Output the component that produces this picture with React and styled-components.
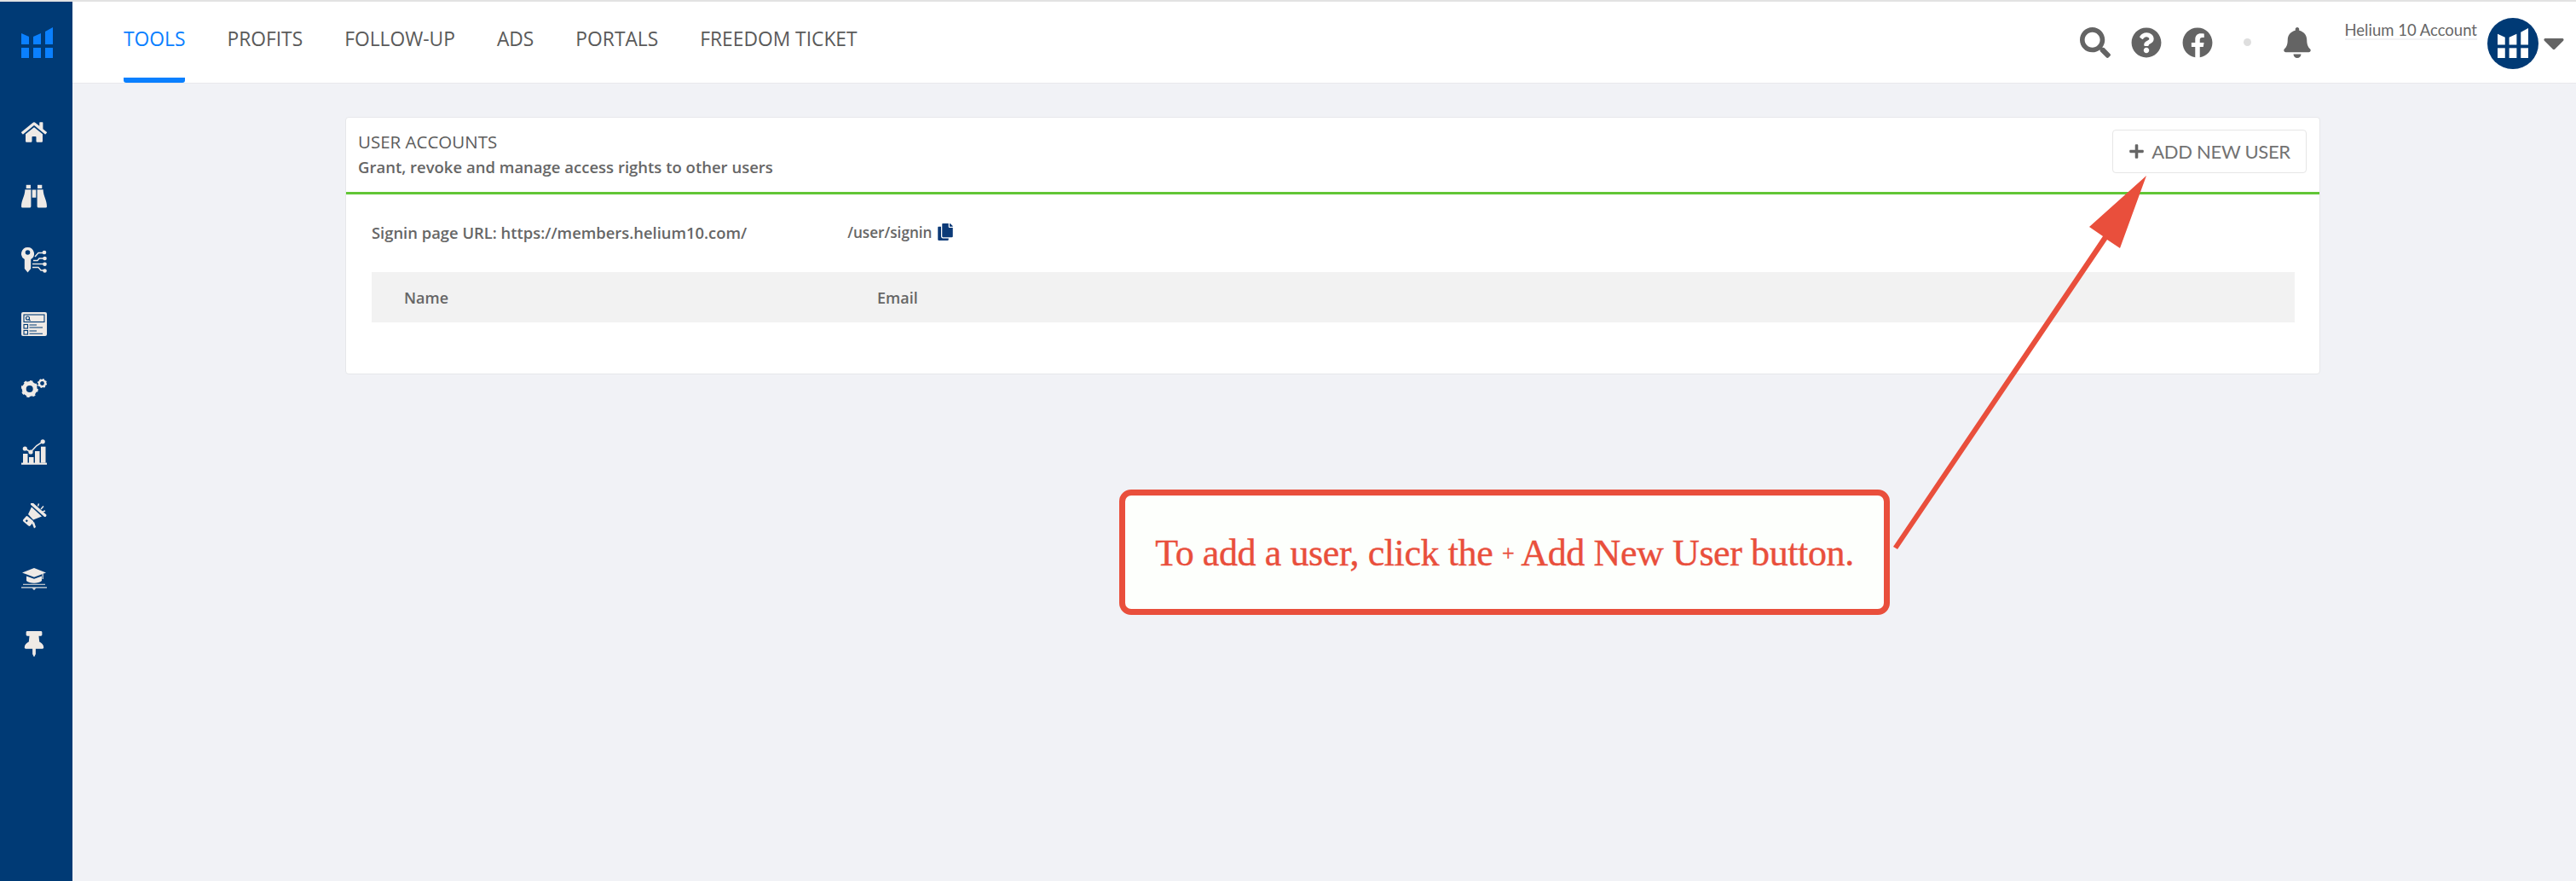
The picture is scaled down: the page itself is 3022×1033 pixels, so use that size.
import React from "react";
import styled, { createGlobalStyle } from "styled-components";
import {
  FaHome,
  FaThumbtack,
  FaSearch,
  FaQuestionCircle,
  FaFacebook,
  FaBell,
  FaCaretDown,
  FaCopy,
  FaPlus,
} from "react-icons/fa";

const CREAM = "#efeae6";
const NAVY = "#003a75";

const GlobalStyle = createGlobalStyle`
  html, body {
    margin: 0;
    padding: 0;
    background: #f1f2f6;
  }
  * {
    box-sizing: border-box;
  }
`;

const Page = styled.div`
  position: relative;
  display: flex;
  width: 3022px;
  height: 1033px;
  overflow: hidden;
  border-top: 2px solid #e2e2e2;
  background: #f1f2f6;
  font-family: "Open Sans", "Lato", sans-serif;
`;

const Sidebar = styled.aside`
  flex: 0 0 85px;
  background: ${NAVY};
  padding-top: 30px;
`;

const LogoSlot = styled.div`
  display: flex;
  height: 85px;
  padding-left: 25px;
  color: #0a80ff;
`;

const SideItem = styled.div`
  display: flex;
  width: 80px;
  height: 75px;
  align-items: center;
  justify-content: center;
  color: ${CREAM};
  font-size: ${({ $size }) => $size || 30}px;
`;

const Content = styled.div`
  flex: 1;
  display: flex;
  flex-direction: column;
`;

const TopBar = styled.header`
  display: flex;
  height: 96px;
  align-items: stretch;
  justify-content: space-between;
  background: #fff;
  border-bottom: 1px solid #e9e9ec;
  padding: 0 6px 0 60px;
`;

const Tabs = styled.nav`
  display: flex;
  gap: 49px;
`;

const Tab = styled.a`
  display: block;
  height: 95px;
  padding-top: 29px;
  font-family: "Open Sans", sans-serif;
  font-size: 22.8px;
  line-height: 29px;
  color: ${({ $active }) => ($active ? "#0a80ff" : "#5a5a5a")};
  border-bottom: 6px solid ${({ $active }) => ($active ? "#0a80ff" : "transparent")};
  border-radius: 0 0 3px 3px;
`;

const TopRight = styled.div`
  display: flex;
  align-items: center;
`;

const TopIcon = styled.span`
  display: flex;
  margin-left: ${({ $gap }) => $gap}px;
  color: #646464;
  font-size: 36px;
`;

const StatusDot = styled.span`
  width: 9px;
  height: 9px;
  margin-left: 36px;
  border-radius: 50%;
  background: #dedede;
`;

const AccountName = styled.span`
  align-self: flex-start;
  margin: 23px 12px 0 38px;
  font-family: "Lato", sans-serif;
  font-size: 18.5px;
  line-height: 20px;
  color: #666;
  border-bottom: 2px solid #f3f3f5;
  white-space: nowrap;
`;

const Avatar = styled.span`
  display: flex;
  width: 60px;
  height: 60px;
  margin-top: 2px;
  align-items: center;
  justify-content: center;
  border-radius: 50%;
  background: ${NAVY};
  color: #fff;
`;

const Caret = styled.span`
  display: flex;
  margin-left: -2px;
  color: #646464;
  font-size: 40px;
`;

const Main = styled.main`
  padding: 39px 0 0 320px;
`;

const Card = styled.section`
  width: 2317px;
  height: 302px;
  background: #fff;
  border: 1px solid #e6e7ea;
  border-radius: 4px;
`;

const CardHead = styled.div`
  display: flex;
  height: 90px;
  align-items: center;
  justify-content: space-between;
  padding: 0 15px 0 14px;
  border-bottom: 3px solid #62c636;
`;

const CardTitle = styled.h2`
  margin: -2px 0 5px;
  font-size: 20.5px;
  line-height: 26px;
  font-weight: 500;
  color: #5c5c5c;
`;

const CardSub = styled.p`
  margin: 0;
  font-size: 18.5px;
  line-height: 24px;
  font-weight: 600;
  color: #666;
`;

const AddButton = styled.button`
  display: flex;
  width: 228px;
  height: 51px;
  margin-top: -8px;
  align-items: center;
  justify-content: center;
  gap: 8px;
  background: #fff;
  border: 1px solid #e6e6e6;
  border-radius: 4px;
  font-family: "Lato", sans-serif;
  font-size: 22px;
  letter-spacing: -0.3px;
  color: #727272;
  svg {
    font-size: 19px;
    color: #666;
  }
`;

const CardBody = styled.div`
  padding: 32px 29px 0 30px;
`;

const SigninRow = styled.div`
  display: flex;
  align-items: center;
  height: 24px;
  font-size: 18.4px;
  font-weight: 600;
  color: #666;
`;

const UrlPath = styled.span`
  margin-left: 118px;
  margin-right: 5px;
  font-size: 17.2px;
`;

const CopyMark = styled.span`
  display: flex;
  color: #0b3a78;
  font-size: 20px;
`;

const TableHead = styled.div`
  display: grid;
  grid-template-columns: 555px 1fr;
  align-items: center;
  height: 59px;
  margin-top: 35px;
  padding-left: 38px;
  background: #f2f2f2;
  font-size: 18px;
  font-weight: 600;
  color: #666;
`;

const Callout = styled.div`
  position: absolute;
  left: 1313px;
  top: 572px;
  display: flex;
  width: 904px;
  height: 147px;
  padding-top: 2px;
  align-items: center;
  justify-content: center;
  background: #fdfffc;
  border: 7px solid #e94f3c;
  border-radius: 14px;
  font-family: "Liberation Serif", "DejaVu Serif", serif;
  font-size: 44px;
  letter-spacing: -0.4px;
  -webkit-text-stroke: 0.4px #e94f3c;
  color: #e94f3c;
  white-space: pre;
`;

const SmallPlus = styled.span`
  font-size: 26px;
`;

const Arrow = styled.svg`
  position: absolute;
  left: 2210px;
  top: 198px;
`;

const LogoMark = ({ size = 37 }) => (
  <svg width={size} height={size * (36 / 37)} viewBox="0 0 37 36" fill="currentColor">
    <polygon points="0,7 9,11 9,20 0,20" />
    <polygon points="14,11 23,7 23,20 14,20" />
    <polygon points="28,5 37,0 37,20 28,20" />
    <rect x="0" y="24" width="9" height="12" />
    <rect x="14" y="24" width="9" height="12" />
    <rect x="28" y="24" width="9" height="12" />
  </svg>
);

const BinocularsIcon = () => (
  <svg width="30" height="28" viewBox="0 0 30 28" fill={CREAM}>
    <rect x="5.7" y="0.8" width="5.3" height="4.2" />
    <rect x="19" y="0.8" width="5.3" height="4.2" />
    <rect x="12.7" y="6.5" width="4.6" height="9.2" />
    <path d="M4.4 6.2 H11.4 V26 A1.6 1.6 0 0 1 9.8 27.6 H1.4 A1.4 1.4 0 0 1 0 26.2 C0 18 4 15 4.4 6.2 Z" />
    <path d="M25.6 6.2 H18.6 V26 A1.6 1.6 0 0 0 20.2 27.6 H28.6 A1.4 1.4 0 0 0 30 26.2 C30 18 26 15 25.6 6.2 Z" />
  </svg>
);

const KeyIcon = () => (
  <svg width="30" height="30" viewBox="0 0 30 30">
    <path
      fill={CREAM}
      fillRule="evenodd"
      d="M7.5 0a7.5 7.5 0 0 1 3.7 14V25L7.5 29.5 3.8 25V14A7.5 7.5 0 0 1 7.5 0zM7.5 3.2a2.8 2.8 0 1 0 0 5.6 2.8 2.8 0 0 0 0-5.6z"
    />
    <g fill="none" stroke={CREAM} strokeWidth="1.4">
      <path d="M16 11 L20 6.5 H27" />
      <path d="M14 15.5 H19 L21 13 H27" />
      <path d="M13 19.5 H27" />
      <path d="M13 23.5 H20 L23 27 H27" />
    </g>
    <g fill={CREAM}>
      <circle cx="27" cy="6" r="2.3" />
      <circle cx="27.5" cy="13" r="2.3" />
      <circle cx="27.5" cy="19.7" r="2.3" />
      <circle cx="27.5" cy="27.5" r="2.3" />
    </g>
  </svg>
);

const FormIcon = () => (
  <svg width="30" height="28" viewBox="0 0 30 28">
    <rect width="30" height="28" rx="2" fill={CREAM} />
    <g fill="none" stroke={NAVY} strokeWidth="1.1">
      <rect x="3" y="3" width="24" height="8.5" />
      <circle cx="7.5" cy="7" r="2" />
      <path d="M9 8.5 L10.5 10" />
      <rect x="3" y="14.5" width="4.5" height="4.5" />
      <rect x="3" y="21.5" width="4.5" height="4.5" />
      <path d="M9.5 15 H18 M9.5 18 H25 M9.5 22 H18 M9.5 25.2 H25" />
    </g>
  </svg>
);

const GearsIcon = () => (
  <svg width="30" height="22" viewBox="0 0 30 22">
    <g fill="none" stroke={CREAM}>
      <circle cx="9.7" cy="12" r="6.5" strokeWidth="5" />
      <circle cx="9.7" cy="12" r="9" strokeWidth="2.2" strokeDasharray="3.4 3.67" />
      <circle cx="24.5" cy="5.5" r="3.6" strokeWidth="2.4" />
      <circle cx="24.5" cy="5.5" r="4.8" strokeWidth="1.5" strokeDasharray="1.9 1.87" />
    </g>
  </svg>
);

const ChartIcon = () => (
  <svg width="30" height="30" viewBox="0 0 30 30">
    <g fill={CREAM}>
      <rect x="0" y="27.6" width="30" height="2.2" />
      <rect x="2" y="17" width="5.5" height="11" />
      <rect x="9" y="21" width="5.5" height="7" />
      <rect x="16" y="14" width="5.5" height="14" />
      <rect x="23" y="8.7" width="5.5" height="19" />
      <circle cx="4.3" cy="11" r="2.6" />
      <circle cx="11" cy="15" r="2.6" />
      <circle cx="25.2" cy="2.8" r="2.6" />
    </g>
    <path d="M4.3 11 L11 15 L18 7.5 L25.2 2.8" fill="none" stroke={CREAM} strokeWidth="1.6" />
  </svg>
);

const MegaphoneIcon = () => (
  <svg width="30" height="30" viewBox="0 0 30 30">
    <g fill={CREAM}>
      <polygon points="12,4.5 24,15.5 14,19.5 8,13" />
      <rect x="2.5" y="17" width="11" height="8" rx="1.6" transform="rotate(40 8 21)" />
      <polygon points="12.5,23 15,22 17,28 15,29.5" />
    </g>
    <path d="M12.7 1 L27.7 14.3" stroke={CREAM} strokeWidth="3.4" strokeLinecap="round" />
    <path d="M19.5 3.5 L20.5 .5 M23 7 L26 3.5 M25 10 L28 9" stroke={CREAM} strokeWidth="1.4" />
    <rect x="5.2" y="19.6" width="2.2" height="2.2" fill={NAVY} transform="rotate(40 6.3 20.7)" />
  </svg>
);

const GradIcon = () => (
  <svg width="30" height="27" viewBox="0 0 30 27">
    <g fill={CREAM}>
      <polygon points="15,0 29,5.5 15,10.7 1,5.5" />
      <path d="M6 9.5 L15 12.8 L24 9.5 V15 C20 18.5 10 18.5 6 15 Z" />
      <rect x="24.6" y="7" width="1.2" height="6" />
      <rect x="2" y="18.7" width="26" height="1.2" opacity="0.85" />
      <rect x="0" y="22.2" width="30" height="1.4" opacity="0.85" />
      <polygon points="12.5,23.5 17.5,23.5 15,26" />
    </g>
  </svg>
);

const sideItems = [
  { key: "home", icon: <FaHome />, size: 30 },
  { key: "research", icon: <BinocularsIcon /> },
  { key: "keywords", icon: <KeyIcon /> },
  { key: "listing", icon: <FormIcon /> },
  { key: "operations", icon: <GearsIcon /> },
  { key: "analytics", icon: <ChartIcon /> },
  { key: "marketing", icon: <MegaphoneIcon /> },
  { key: "academy", icon: <GradIcon /> },
  { key: "pinned", icon: <FaThumbtack />, size: 30 },
];

const tabs = ["TOOLS", "PROFITS", "FOLLOW-UP", "ADS", "PORTALS", "FREEDOM TICKET"];

export default function App() {
  return (
    <>
      <GlobalStyle />
      <Page>
        <Sidebar>
          <LogoSlot>
            <LogoMark />
          </LogoSlot>
          {sideItems.map((item) => (
            <SideItem key={item.key} $size={item.size}>
              {item.icon}
            </SideItem>
          ))}
        </Sidebar>

        <Content>
          <TopBar>
            <Tabs>
              {tabs.map((t, i) => (
                <Tab key={t} $active={i === 0}>
                  {t}
                </Tab>
              ))}
            </Tabs>
            <TopRight>
              <TopIcon $gap={0}>
                <FaSearch />
              </TopIcon>
              <TopIcon $gap={24}>
                <FaQuestionCircle />
              </TopIcon>
              <TopIcon $gap={24}>
                <FaFacebook />
              </TopIcon>
              <StatusDot />
              <TopIcon $gap={36}>
                <FaBell />
              </TopIcon>
              <AccountName>Helium 10 Account</AccountName>
              <Avatar>
                <LogoMark size={36} />
              </Avatar>
              <Caret>
                <FaCaretDown />
              </Caret>
            </TopRight>
          </TopBar>

          <Main>
            <Card>
              <CardHead>
                <div>
                  <CardTitle>USER ACCOUNTS</CardTitle>
                  <CardSub>Grant, revoke and manage access rights to other users</CardSub>
                </div>
                <AddButton>
                  <FaPlus /> ADD NEW USER
                </AddButton>
              </CardHead>
              <CardBody>
                <SigninRow>
                  <span>Signin page URL: https://members.helium10.com/</span>
                  <UrlPath>/user/signin</UrlPath>
                  <CopyMark>
                    <FaCopy />
                  </CopyMark>
                </SigninRow>
                <TableHead>
                  <span>Name</span>
                  <span>Email</span>
                </TableHead>
              </CardBody>
            </Card>
          </Main>
        </Content>

        <Callout>
          To add a user, click the <SmallPlus>+</SmallPlus> Add New User button.
        </Callout>
        <Arrow width="320" height="460" viewBox="2210 200 320 460">
          <polygon
            fill="#e94f3c"
            points="2518,206 2487,291 2472,281 2226,644 2221,641 2467,277 2451,266"
          />
        </Arrow>
      </Page>
    </>
  );
}
